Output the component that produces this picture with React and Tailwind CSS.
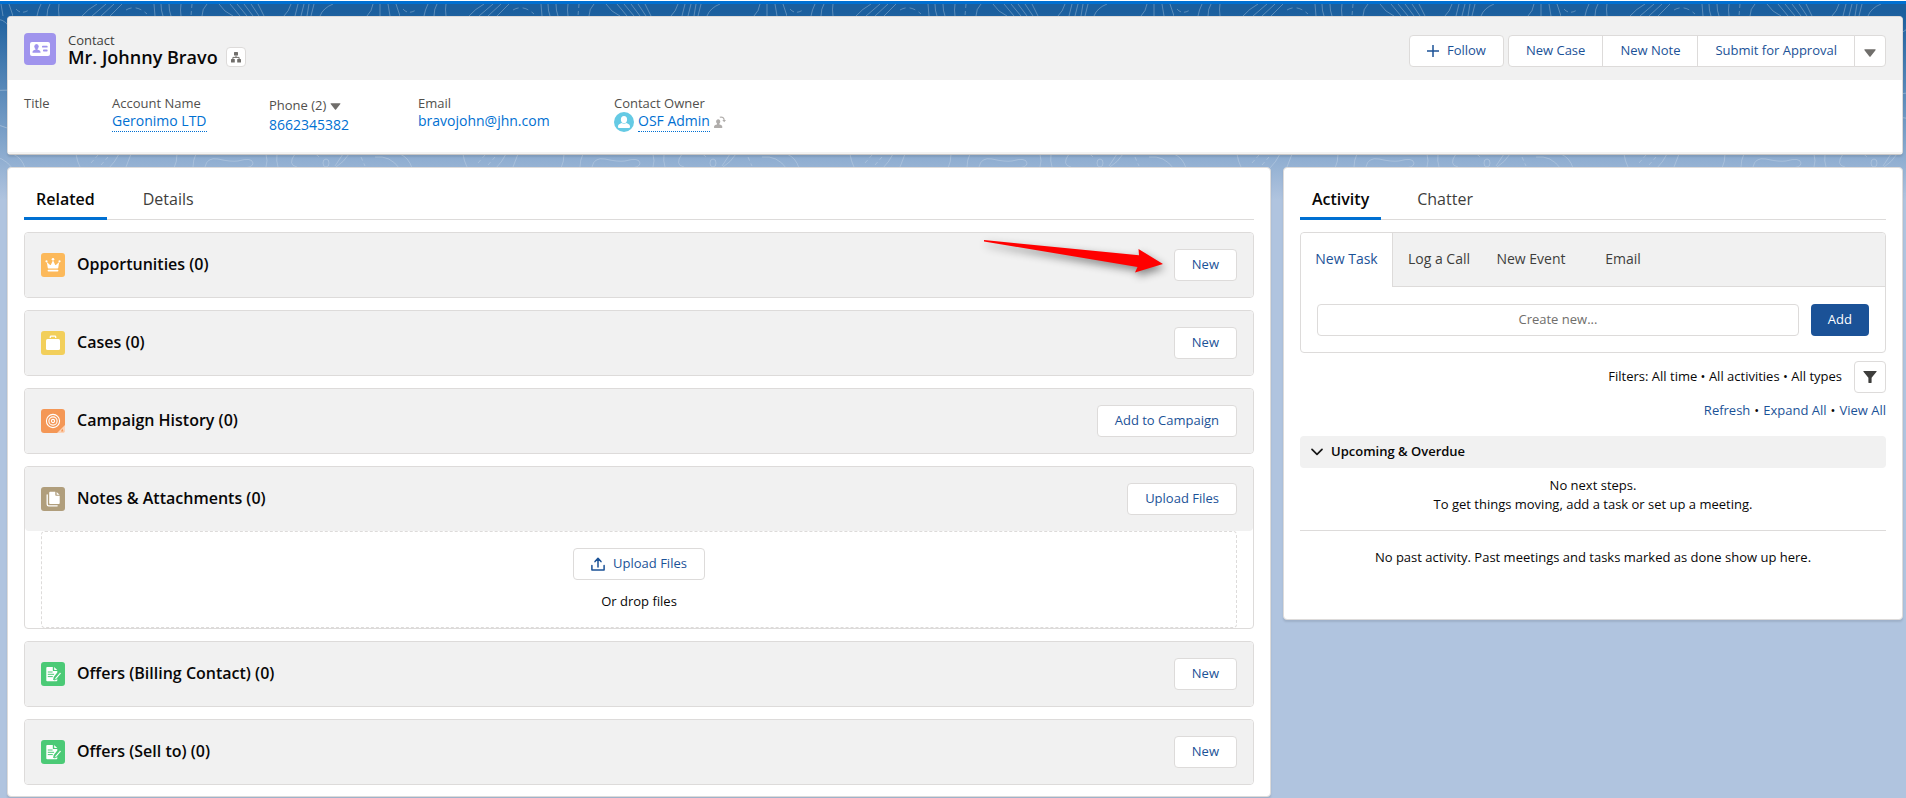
import React from "react";

/* ---------- Backdrop ---------- */

function Backdrop() {
  return (
    <svg className="absolute inset-x-0 top-0 -z-10 h-[200px] w-full" aria-hidden="true">
      <defs>
        <linearGradient id="sky" x1="0" y1="0" x2="0" y2="1">
          <stop offset="0.06" stopColor="#1b5f9e" />
          <stop offset="1" stopColor="#b0c4df" />
        </linearGradient>
        <linearGradient id="fadeOut" x1="0" y1="0" x2="0" y2="1">
          <stop offset="0.75" stopColor="#fff" />
          <stop offset="1" stopColor="#000" />
        </linearGradient>
        <mask id="fade">
          <rect width="100%" height="200" fill="url(#fadeOut)" />
        </mask>
        <pattern id="topo" x="13" y="0" width="387" height="200" patternUnits="userSpaceOnUse">
          <g fill="none" stroke="#fff" strokeOpacity="0.28" strokeWidth="1">
            <path d="M3 9 q5 6 13 1" strokeDasharray="5 3" />
            <path d="M28 4 q-3 6 -4 12 M37 4 q-3 5 -3 12 M46 4 q-1 5 0 12" />
            <path d="M84 4 q-9 5 -15 12 M93 4 L79 16 M101 4 L88 16 M109 4 L97 16" />
            <path d="M113 10 q10 -6 21 4" strokeDasharray="6 4" />
            <path d="M141 4 l1 12 M148 4 q0 7 2 12 M156 4 q0 7 2 12 M168 4 q-1 6 0 12 M194 4 q-5 5 -5 12" />
            <path d="M179 4 l-1 12" strokeDasharray="4 3" />
            <path d="M206 4 q5 8 14 12 M217 4 l10 12 M224 4 l10 12 M231 4 l9 12 M238 4 l8 12 M245 4 l6 12" />
            <path d="M278 4 q-2 7 -7 12 M285 4 l-3 12 M291 4 l-3 12 M296 4 l-2 12 M301 4 l-3 12 M320 4 q-10 4 -13 12" />
            <path d="M360 4 q-1 7 -6 12 M367 4 v12 M375 4 l2 12 M383 4 l4 12" />
            <path d="M0 40 q40 30 90 10 t100 30 t120 -20 t77 -20 M0 90 q60 -20 120 10 t140 10 t127 -20 M0 130 q50 -30 110 0 t130 0 t147 0" />
            <path d="M0 154 q9 4 12 14 M63 154 q1 7 4 13 M106 154 q-4 8 -10 14 M118 154 l-5 13 M164 154 q0 8 -3 14 M183 154 q-3 6 -3 13" />
            <path d="M78 163 l7 -8 M88 165 l7 -8" strokeDasharray="4 3" />
            <path d="M192 167 q2 -10 13 -8 q13 3 20 2 q14 -4 15 2 q0 5 -12 5 M253 154 q2 7 0 13 M264 154 q-1 7 1 13 M282 154 q-8 11 2 13 M296 154 q6 -2 10 3" />
            <ellipse cx="313" cy="163" rx="3" ry="4" />
            <path d="M336 154 q-5 8 -13 13 M330 154 l-8 12" />
            <path d="M348 157 l4 9" strokeDasharray="4 3" />
            <path d="M362 157 q15 -2 25 12" />
            <path d="M0 178 q30 -8 50 10 M70 172 q-10 20 20 22 M150 172 q-10 18 10 26 M200 180 q30 -12 60 6 M290 170 q-15 12 -8 26 M325 172 q-6 16 20 22" />
          </g>
        </pattern>
      </defs>
      <rect width="100%" height="200" fill="url(#sky)" />
      <rect width="100%" height="200" fill="url(#topo)" mask="url(#fade)" />
    </svg>
  );
}

/* ---------- Icons ---------- */

function ContactIcon() {
  return (
    <svg className="size-8 shrink-0" viewBox="0 0 32 32" aria-hidden="true">
      <rect width="32" height="32" rx="4" fill="#a094ed" />
      <rect x="6" y="9" width="20" height="14" rx="2" fill="#fff" />
      <g fill="#a094ed">
        <ellipse cx="12.5" cy="13.6" rx="2.2" ry="2.6" />
        <path d="M11.6 15h1.8v1.4c1.9.6 3.1 1.2 3.1 2.6v.8h-8V19c0-1.4 1.2-2 3.1-2.6z" />
        <rect x="18" y="12.8" width="5.6" height="1.8" rx=".7" />
        <rect x="19" y="16.6" width="4.6" height="1.8" rx=".7" />
      </g>
    </svg>
  );
}

function HierarchyIcon() {
  return (
    <svg className="size-3" viewBox="0 0 12 12" aria-hidden="true">
      <g fill="#706e6b">
        <rect x="4" y="1" width="4" height="3.6" rx=".5" />
        <rect x="1" y="8" width="3.8" height="3.4" rx=".5" />
        <rect x="7.2" y="8" width="3.8" height="3.4" rx=".5" />
      </g>
      <path d="M6 4.5v2M2.9 8V6.4h6.2V8" fill="none" stroke="#706e6b" strokeWidth="1" />
    </svg>
  );
}

function CaretDown({ className }) {
  return (
    <svg className={className} viewBox="0 0 12 8" aria-hidden="true">
      <path d="M1 .3h10c.6 0 .8.5.5.9L6.6 7.4c-.3.4-.9.4-1.2 0L.5 1.2C.2.8.4.3 1 .3z" fill="#706e6b" />
    </svg>
  );
}

function UserIcon() {
  return (
    <svg className="size-5 shrink-0" viewBox="0 0 20 20" aria-hidden="true">
      <circle cx="10" cy="10" r="10" fill="#65cae4" />
      <ellipse cx="10" cy="7.6" rx="3.1" ry="3.6" fill="#fff" />
      <path d="M4 15v-.6c0-1.8 2-2.6 3.9-3.3.9.8 3.3.8 4.2 0 1.900.7 3.900 1.500 3.900 3.300v.6c0 .6-.4.9-.9.9H4.900C4.400 15.900 4 15.600 4 15z" fill="#fff" />
    </svg>
  );
}

function ChangeOwnerIcon() {
  return (
    <svg className="size-3 shrink-0" viewBox="0 0 12 12" aria-hidden="true">
      <path d="M4.200 3.200c1.300 0 2.100 1 2.100 2.300 0 .9-.4 1.600-.9 2v.9c1.700.4 2.900 1 2.900 2.300v.9c0 .2-.1.4-.4.4H.4c-.3 0-.4-.2-.4-.4v-.9C0 9.400 1.300 8.800 3 8.400v-.9c-.5-.4-.9-1.100-.9-2 0-1.300.8-2.300 2.100-2.300z" fill="#b0adab" />
      <path d="M5.800 1.300c2.400-.8 4.400.5 4.400 3.300" fill="none" stroke="#b0adab" strokeWidth="1.200" />
      <path d="M8.300 4h3.700l-1.800 2.300z" fill="#b0adab" />
    </svg>
  );
}

function Plus() {
  return (
    <svg className="size-3" viewBox="0 0 12 12" aria-hidden="true">
      <path d="M6 .4v11.200M.4 6h11.200" stroke="#1b5297" strokeWidth="1.500" strokeLinecap="round" />
    </svg>
  );
}

function UploadIcon() {
  return (
    <svg className="size-[14px]" viewBox="0 0 14 14" aria-hidden="true">
      <g fill="none" stroke="#1b5297" strokeWidth="1.500" strokeLinecap="round" strokeLinejoin="round">
        <path d="M.9 8.600v4.500h12.200V8.600" />
        <path d="M7 10V2M4 4.600L7 1.300l3 3.300" />
      </g>
    </svg>
  );
}

function FilterIcon() {
  return (
    <svg className="size-[14px]" viewBox="0 0 14 14" aria-hidden="true">
      <path d="M.8 1h12.400c.4 0 .6.400.3.700L8.600 7.700v4.900c0 .2-.2.400-.4.400H5.800c-.2 0-.4-.2-.4-.4V7.700L.5 1.700C.2 1.400.4 1 .8 1z" fill="#3e3e3c" />
    </svg>
  );
}

function ChevronDown() {
  return (
    <svg className="h-2 w-3" viewBox="0 0 12 8" aria-hidden="true">
      <path d="M1 1.300l5 5 5-5" fill="none" stroke="#181818" strokeWidth="1.700" strokeLinecap="round" strokeLinejoin="round" />
    </svg>
  );
}

const GLYPHS = {
  opportunity: {
    fill: "#fcb95b",
    art: (
      <g fill="#fff">
        <path d="M5.800 9l3.300 2.900c.3.200.7.100.8-.2L12 7.200l2.100 4.500c.1.300.5.400.8.200L18.200 9l-1 6.100c-.1.300-.3.500-.6.500H7.400c-.3 0-.5-.2-.6-.5z" />
        <circle cx="12" cy="6.300" r="1.300" />
        <circle cx="5.500" cy="8.300" r="1.100" />
        <circle cx="18.500" cy="8.300" r="1.100" />
        <rect x="6.600" y="16.700" width="10.800" height="1.900" rx=".8" />
      </g>
    ),
  },
  case: {
    fill: "#f2cf5b",
    art: (
      <g>
        <path d="M9.300 7V6c0-.5.400-.8.800-.8h3.800c.4 0 .8.300.8.800v1" fill="none" stroke="#fff" strokeWidth="1.300" />
        <rect x="5" y="8" width="14" height="11" rx="1.500" fill="#fff" />
      </g>
    ),
  },
  campaign: {
    fill: "#f49756",
    art: (
      <g>
        <g fill="none" stroke="#fff" strokeWidth="1.100">
          <circle cx="12" cy="12" r="6.600" />
          <circle cx="12" cy="12" r="4.100" />
          <circle cx="12" cy="12" r="1.600" />
        </g>
        <path d="M24 16v5a3 3 0 0 1-3 3h-5z" fill="#fff" fillOpacity=".6" />
        <path d="M21.300 19.400l1.300 3.200h-2.600z" fill="#f49756" />
      </g>
    ),
  },
  notes: {
    fill: "#b09e7c",
    art: (
      <g>
        <path d="M9.300 4.800h5v3.300c0 .4.300.7.700.7h3.700v7.100c0 .6-.5 1.100-1.100 1.100H9.300c-.6 0-1.100-.5-1.100-1.100V5.900c0-.6.500-1.100 1.100-1.100z" fill="#fff" />
        <path d="M15.600 4.900l3 2.800h-2.700c-.2 0-.3-.1-.3-.3z" fill="#fff" />
        <path d="M6.200 7.800v9.400c0 1 .6 1.600 1.600 1.600h8.400" fill="none" stroke="#fff" strokeWidth="1.300" strokeLinecap="round" />
      </g>
    ),
  },
  offer: {
    fill: "#4bca76",
    art: (
      <g>
        <path d="M6.200 5h5.600v3.200c0 .5.400.9.900.9h3.600v1.500l-3.600 4.300-.6 3h2.600l1.600-.9v1.400c0 .4-.4.800-.8.800H6.200c-.5 0-.9-.4-.9-.8V5.800c0-.4.400-.8.900-.8z" fill="#fff" />
        <path d="M13 5l3.300 3h-3z" fill="#fff" />
        <path d="M7.200 10h4M7.200 12.300h5.500M7.200 14.600h4.200" stroke="#4bca76" strokeWidth="1" strokeLinecap="round" />
        <path d="M18.900 10.400l-4.800 5.700-.6 2 1.900-.9 4.700-5.700" fill="#fff" stroke="#4bca76" strokeWidth=".7" />
      </g>
    ),
  },
};

function ObjectIcon({ name }) {
  const { fill, art } = GLYPHS[name];
  return (
    <svg className="size-6 shrink-0" viewBox="0 0 24 24" aria-hidden="true">
      <rect width="24" height="24" rx="3" fill={fill} />
      {art}
    </svg>
  );
}

/* ---------- Controls ---------- */

function Button({ children, className = "" }) {
  return (
    <button
      type="button"
      className={`flex h-8 items-center whitespace-nowrap rounded border border-[#dddbda] bg-white px-[17px] text-[#1b5297] ${className}`}
    >
      {children}
    </button>
  );
}

function Tabs({ items }) {
  return (
    <div role="tablist" className="flex h-10 border-b border-[#dddbda] text-base">
      {items.map((label, i) => (
        <button
          key={label}
          type="button"
          role="tab"
          aria-selected={i === 0}
          className={
            i === 0
              ? "-mb-px mr-6 border-b-[3px] border-[#0070d2] px-3 font-semibold text-[#080707]"
              : "-mb-px border-b-[3px] border-transparent px-3 text-[#3e3e3c]"
          }
        >
          {label}
        </button>
      ))}
    </div>
  );
}

function Field({ label, className = "", children }) {
  return (
    <div className={className}>
      <div className="leading-[18px] text-[#514f4d]">{label}</div>
      {children}
    </div>
  );
}

function RelatedCard({ icon, title, action, children }) {
  return (
    <article className="rounded border border-[#dddbda] bg-white">
      <header className="flex items-center rounded bg-[#f1f1f1] p-4">
        <ObjectIcon name={icon} />
        <h2 className="ml-3 flex-1 pb-[2px] text-base font-semibold leading-6">{title}</h2>
        <Button>{action}</Button>
      </header>
      {children}
    </article>
  );
}

function Pointer() {
  return (
    <svg
      className="pointer-events-none absolute -top-1 right-[82px] h-[56px] w-[200px]"
      viewBox="0 0 200 56"
      aria-hidden="true"
    >
      <path
        d="M12 12L167 27.300L166.500 21L191 36L163 44.500L165.500 39L12 13.500z"
        fill="#f00"
        className="drop-shadow-[2px_4px_4px_rgba(0,0,0,0.45)]"
      />
    </svg>
  );
}

/* ---------- Page ---------- */

function RecordHeader() {
  return (
    <section className="rounded border border-[#dddbda] border-b-[#c9c7c5] bg-white shadow-[0_2px_2px_rgba(0,0,0,0.1)]">
      <div className="flex h-[63px] items-start rounded-t bg-[#f1f1f1] px-4 pt-4">
        <ContactIcon />
        <div className="ml-3">
          <div className="leading-[14px] text-[#3e3e3c]">Contact</div>
          <div className="flex items-center gap-2">
            <h1 className="text-lg font-semibold leading-5">Mr. Johnny Bravo</h1>
            <button
              type="button"
              aria-label="View contact hierarchy"
              className="flex size-5 items-center justify-center rounded border border-[#dddbda] bg-white"
            >
              <HierarchyIcon />
            </button>
          </div>
        </div>
        <div className="ml-auto mt-[2px] flex gap-1">
          <Button className="gap-2">
            <Plus />
            Follow
          </Button>
          <div className="flex">
            <Button className="rounded-r-none">New Case</Button>
            <Button className="-ml-px rounded-none">New Note</Button>
            <Button className="-ml-px rounded-none">Submit for Approval</Button>
            <button
              type="button"
              aria-label="More actions"
              className="-ml-px flex h-8 w-8 items-center justify-center rounded-r border border-[#dddbda] bg-white pt-1"
            >
              <CaretDown className="h-2 w-3" />
            </button>
          </div>
        </div>
      </div>
      <div className="flex h-[74px] border-b-2 border-[#f3f3f3] px-4 pt-[14px]">
        <Field label="Title" className="w-[88px]" />
        <Field label="Account Name" className="w-[157px]">
          <a href="#account" className="inline-block border-b border-dotted border-[#0070d2] pb-[2px] text-sm leading-[17px] text-[#0070d2]">
            Geronimo LTD
          </a>
        </Field>
        <Field
          className="w-[149px] pt-[2px]"
          label={
            <span className="flex items-center gap-1">
              Phone (2)
              <CaretDown className="mt-[2px] h-[7px] w-[11px]" />
            </span>
          }
        >
          <a href="tel:8662345382" className="block text-sm leading-[22px] text-[#0070d2]">
            8662345382
          </a>
        </Field>
        <Field label="Email" className="w-[196px]">
          <a href="mailto:bravojohn@jhn.com" className="block text-sm leading-[17px] text-[#0070d2]">
            bravojohn@jhn.com
          </a>
        </Field>
        <Field label="Contact Owner">
          <div className="flex items-center gap-1">
            <UserIcon />
            <a href="#owner" className="border-b border-dotted border-[#0070d2] pb-[2px] text-sm leading-[17px] text-[#0070d2]">
              OSF Admin
            </a>
            <button type="button" aria-label="Change Owner">
              <ChangeOwnerIcon />
            </button>
          </div>
        </Field>
      </div>
    </section>
  );
}

function RelatedPanel() {
  return (
    <main className="rounded border border-[#dddbda] bg-white px-4 pb-[11px] pt-3 shadow-[0_2px_2px_rgba(0,0,0,0.1)]">
      <Tabs items={["Related", "Details"]} />
      <div className="relative mt-3 flex flex-col gap-3">
        <RelatedCard icon="opportunity" title="Opportunities (0)" action="New" />
        <RelatedCard icon="case" title="Cases (0)" action="New" />
        <RelatedCard icon="campaign" title="Campaign History (0)" action="Add to Campaign" />
        <RelatedCard icon="notes" title="Notes & Attachments (0)" action="Upload Files">
          <div className="mx-4 flex flex-col items-center rounded border border-dashed border-[#dddbda] py-4">
            <Button className="gap-2">
              <UploadIcon />
              Upload Files
            </Button>
            <p className="mt-3 leading-[19px]">Or drop files</p>
          </div>
        </RelatedCard>
        <RelatedCard icon="offer" title="Offers (Billing Contact) (0)" action="New" />
        <RelatedCard icon="offer" title="Offers (Sell to) (0)" action="New" />
        <Pointer />
      </div>
    </main>
  );
}

function ActivityPanel() {
  const actions = ["New Task", "Log a Call", "New Event", "Email"];
  return (
    <aside className="rounded border border-[#dddbda] bg-white px-4 pb-[52px] pt-3 shadow-[0_2px_2px_rgba(0,0,0,0.1)]">
      <Tabs items={["Activity", "Chatter"]} />
      <div className="mt-3 rounded border border-[#dddbda]">
        <div className="flex h-[54px] rounded-t bg-[#f1f1f1] text-sm">
          {actions.map((label, i) => (
            <button
              key={label}
              type="button"
              className={
                i === 0
                  ? "w-[92px] rounded-tl border-r border-[#dddbda] bg-white pb-[2px] text-[#1b5297]"
                  : "w-[92px] border-b border-[#dddbda] pb-px text-[#3e3e3c]"
              }
            >
              {label}
            </button>
          ))}
          <span className="flex-1 border-b border-[#dddbda]" />
        </div>
        <div className="flex gap-3 p-4 pt-[17px]">
          <input
            type="text"
            aria-label="Create new task"
            placeholder="Create new..."
            className="h-8 min-w-0 flex-1 rounded border border-[#dddbda] bg-white pb-[2px] text-center placeholder:text-[#706e6b]"
          />
          <button type="button" className="h-8 rounded bg-[#1b5297] px-[17px] text-white">
            Add
          </button>
        </div>
      </div>
      <div className="mt-2 flex items-center justify-end gap-3">
        <span>Filters: All time • All activities • All types</span>
        <button
          type="button"
          aria-label="Timeline settings"
          className="flex size-8 items-center justify-center rounded border border-[#dddbda] bg-white"
        >
          <FilterIcon />
        </button>
      </div>
      <div className="mt-[7px] flex justify-end gap-1 leading-5">
        <button type="button" className="text-[#1b5297]">Refresh</button>
        <span>•</span>
        <button type="button" className="text-[#1b5297]">Expand All</button>
        <span>•</span>
        <button type="button" className="text-[#1b5297]">View All</button>
      </div>
      <button
        type="button"
        aria-expanded="true"
        className="mt-4 flex h-8 w-full items-center gap-2 rounded bg-[#f1f1f1] px-[11px] font-semibold"
      >
        <ChevronDown />
        Upcoming &amp; Overdue
      </button>
      <div className="border-b border-[#dddbda] pb-4 pt-2 text-center leading-[19px]">
        <p>No next steps.</p>
        <p>To get things moving, add a task or set up a meeting.</p>
      </div>
      <p className="mt-4 text-center leading-5">
        No past activity. Past meetings and tasks marked as done show up here.
      </p>
    </aside>
  );
}

export default function App() {
  return (
    <div className="min-h-screen bg-[#b0c4df] font-['Open_Sans','Noto_Sans',sans-serif] text-[13px] text-[#080707]">
      <div className="relative isolate">
        <Backdrop />
        <div className="h-1 border-t border-white bg-[#0070d2]" />
        <div className="flex flex-col gap-3 pl-[7px] pr-[3px] pt-3">
          <RecordHeader />
          <div className="grid grid-cols-[1264fr_620fr] items-start gap-3">
            <RelatedPanel />
            <ActivityPanel />
          </div>
        </div>
      </div>
    </div>
  );
}
